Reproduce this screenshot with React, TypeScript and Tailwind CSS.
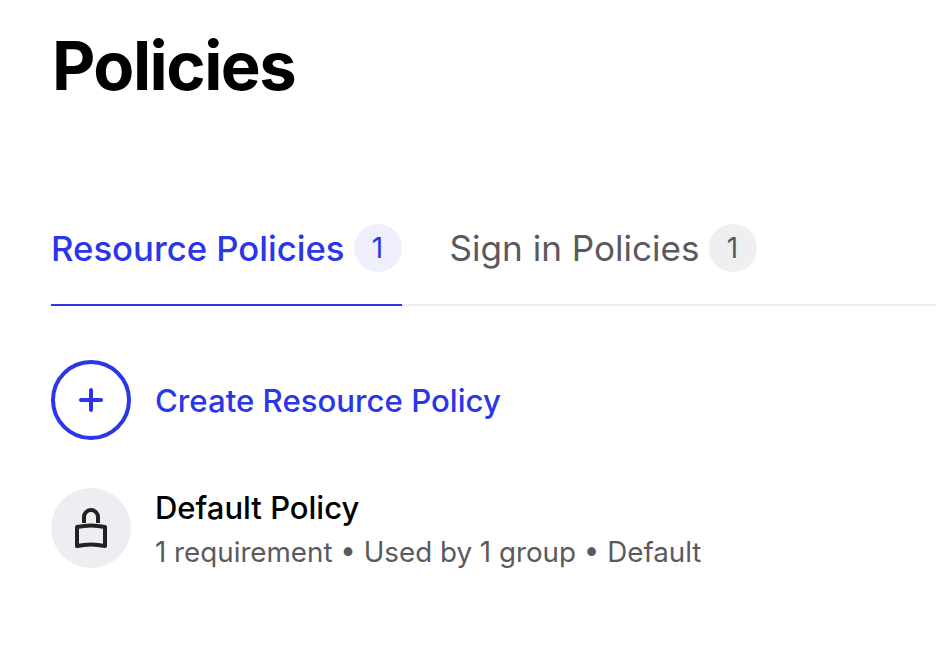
import React from "react";

function Badge({ active, n }: { active?: boolean; n: number }) {
  return (
    <span className={active ? "flex h-[48px] w-[48px] items-center justify-center rounded-full bg-[#f0f0fc] text-[28px] text-[#2a36e8]" : "flex h-[48px] w-[48px] items-center justify-center rounded-full bg-[#efeff1] text-[28px] text-[#5a5a5e]"}>
      {n}
    </span>
  );
}

export default function App() {
  return (
    <div className="h-[652px] w-[936px] overflow-hidden bg-white pl-[51px] [font-family:Inter,sans-serif]">
      <h1 className="pt-[24px] pl-[1px] text-[67px] leading-[84px] font-bold tracking-[-1.5px] text-black">Policies</h1>
      <div className="mt-[116px] flex h-[82px] border-b-2 border-[#ececee]">
        <div className="-mb-[2px] flex h-[82px] items-start gap-[9px] border-b-2 border-[#2a36e8]">
          <span className="text-[34.7px] leading-[48px] font-medium text-[#2a36e8]">Resource Policies</span>
          <Badge active n={1} />
        </div>
        <div className="ml-[48px] flex items-start gap-[9px]">
          <span className="text-[35.1px] leading-[48px] text-[#5a5a5e]">Sign in Policies</span>
          <Badge n={1} />
        </div>
      </div>
      <div className="mt-[54px] flex items-center gap-[24px]">
        <div className="flex h-[80px] w-[80px] items-center justify-center rounded-full border-4 border-[#2a36e8]">
          <svg width="24" height="24" viewBox="0 0 24 24" fill="none" stroke="#2a36e8" strokeWidth="4" strokeLinecap="round"><path d="M12 2v20M2 12h20" /></svg>
        </div>
        <span className="pt-[2px] text-[31.2px] font-medium text-[#2a36e8]">Create Resource Policy</span>
      </div>
      <div className="mt-[48px] flex items-center gap-[24px]">
        <div className="flex h-[80px] w-[80px] items-center justify-center rounded-full bg-[#edeef1]">
          <svg width="32" height="40" viewBox="0 0 32 40" fill="none" stroke="#222" strokeWidth="4" strokeLinejoin="round"><path d="M9 15V9a7 7 0 0 1 14 0v6" /><path d="M2 19c9-2 19-2 28 0v19c-9-2-19-2-28 0z" /></svg>
        </div>
        <div>
          <div className="text-[31px] leading-[40px] font-medium text-black">Default Policy</div>
          <div className="mt-[8px] text-[27.75px] leading-[32px] text-[#5a5a5e]">1 requirement • Used by 1 group • Default</div>
        </div>
      </div>
    </div>
  );
}
